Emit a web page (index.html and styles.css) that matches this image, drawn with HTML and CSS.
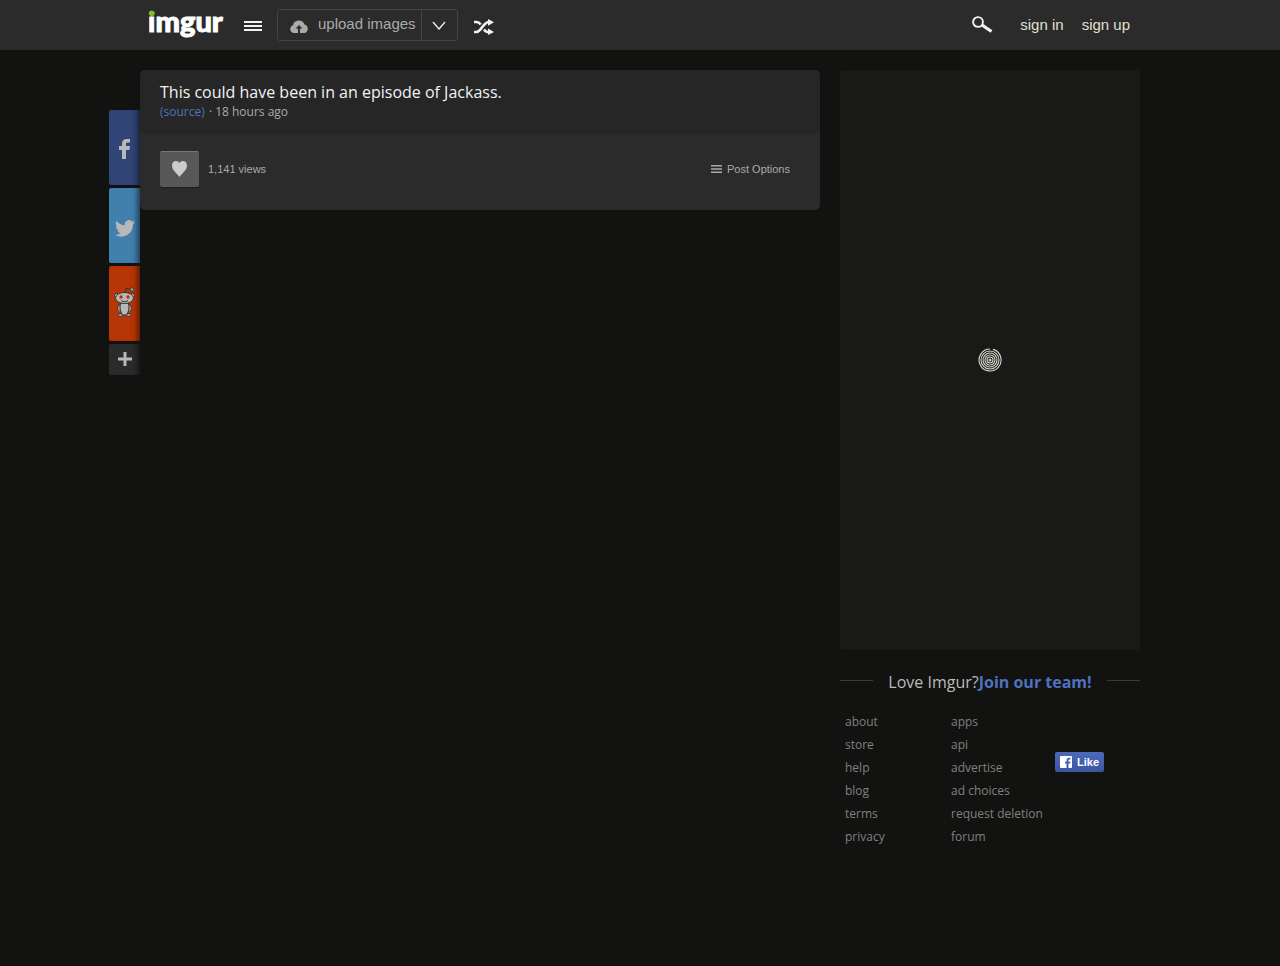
FILE: index.html
```html
<!DOCTYPE html>
<html lang="en">
<head>
    <meta charset="UTF-8">
    <meta name="viewport" content="width=device-width, initial-scale=1.0">
    <title>This could have been in an episode of Jackass. - Imgur</title>
    <link rel="stylesheet" href="styles.css">
</head>
<body>
    <header class="topbar">
        <div class="topbar-inner">
            <a href="#" class="logo"><span class="logo-i">i</span>mgur</a>
            <button type="button" class="icon-button menu" aria-label="Menu">
                <svg width="18" height="10" viewBox="0 0 18 10" fill="#f2f2f2"><path d="M0 0h18v2H0zM0 4h18v2H0zM0 8h18v2H0z"/></svg>
            </button>
            <div class="upload">
                <button type="button" class="upload-main">
                    <svg width="18" height="13" viewBox="0 0 18 13"><path d="M4 13A4 4 0 0 1 3 5.200 6 6 0 0 1 14.500 4.400a4.400 4.400 0 0 1-.5 8.600z" fill="#aaa"/><path d="M9 5l3.500 3.500H10V13H8V8.500H5.500z" fill="#2b2b2b"/></svg>
                    upload images
                </button>
                <button type="button" class="upload-more" aria-label="More upload options">
                    <svg width="14" height="9" viewBox="0 0 14 9" fill="none" stroke="#e6e6d8" stroke-width="1.500"><path d="M1 1l6 7 6-7"/></svg>
                </button>
            </div>
            <button type="button" class="icon-button random" aria-label="Random">
                <svg width="20" height="16" viewBox="0 0 20 16"><path d="M0 13h2.500C7.500 13 9 3 15 3M0 3h2.500c2 0 3.200 1.200 4.200 2.600M10 10.500c1.200 1.600 2.600 2.700 5 2.700" fill="none" stroke="#f2f2f2" stroke-width="2.600"/><path d="M14 0l6 3.200-6 3.500zM14 9.500l6 3.500-6 3z" fill="#f2f2f2"/></svg>
            </button>
            <nav class="account">
                <button type="button" class="icon-button" aria-label="Search">
                    <svg width="21" height="17" viewBox="0 0 21 17" fill="none" stroke="#f2f2f2"><circle cx="6" cy="6" r="4.900" stroke-width="1.900"/><path d="M10 9l9.500 6.500" stroke-width="3.200"/></svg>
                </button>
                <a href="#">sign in</a>
                <a href="#">sign up</a>
            </nav>
        </div>
    </header>

    <div class="page">
        <div class="share">
            <a href="#" class="share-item facebook" aria-label="Share on Facebook">
                <svg width="11" height="20" viewBox="0 0 11 20" fill="#b8b8b8"><path d="M3 20v-9H0V7h3V5c0-3.200 1.700-5 4.500-5H11v3.500H8.500C7.300 3.500 7 4 7 5v2h4l-.5 4H7v9z"/></svg>
            </a>
            <a href="#" class="share-item twitter" aria-label="Share on Twitter">
                <svg width="20" height="17" viewBox="0 0 24 20" fill="#b8b8b8"><path d="M24 2.400a10 10 0 0 1-2.800.8A5 5 0 0 0 23.300.5a10 10 0 0 1-3.100 1.200 4.900 4.900 0 0 0-8.400 4.500A14 14 0 0 1 1.700 1a4.900 4.900 0 0 0 1.500 6.600A4.900 4.900 0 0 1 1 7a5 5 0 0 0 3.900 4.900 5 5 0 0 1-2.200.1 4.900 4.900 0 0 0 4.600 3.400A9.900 9.900 0 0 1 0 17.500 14 14 0 0 0 21.500 5a10 10 0 0 0 2.500-2.600z"/></svg>
            </a>
            <a href="#" class="share-item reddit" aria-label="Share on Reddit">
                <svg width="21" height="30" viewBox="0 0 21 30" fill="#b8b8b8" stroke="#333" stroke-width="1"><path d="M11 6l1-4.500 4 .8" fill="none"/><circle cx="18" cy="2.500" r="1.700"/><circle cx="2.500" cy="8.500" r="2"/><circle cx="18.500" cy="8.500" r="2"/><ellipse cx="6.500" cy="28" rx="3" ry="1.300"/><ellipse cx="14.500" cy="28" rx="3" ry="1.300"/><path d="M6 17c-3 3-3 6-.5 8M15 17c3 3 3 6 .5 8"/><path d="M6.500 16h8c1 5 .5 8-2 12h-4c-2.500-4-3-7-2-12z"/><ellipse cx="10.500" cy="11" rx="9" ry="5.500"/><path d="M7 13.500c2 1.500 5 1.500 7 0" fill="none"/><g fill="#c22a05" stroke="none"><circle cx="7" cy="10" r="1.700"/><circle cx="14" cy="10" r="1.700"/></g></svg>
            </a>
            <button type="button" class="share-item more" aria-label="More sharing options">
                <svg width="14" height="14" viewBox="0 0 14 14" stroke="#b8b8b8" stroke-width="3"><path d="M7 0v14M0 7h14"/></svg>
            </button>
        </div>

        <main class="post">
            <div class="post-header">
                <h1>This could have been in an episode of Jackass.</h1>
                <p><a href="#">(source)</a> · 18 hours ago</p>
            </div>
            <div class="post-actions">
                <button type="button" class="favorite" aria-label="Favorite">
                    <svg width="15" height="16" viewBox="0 0 15 16" fill="#ccc"><path d="M7.500 16C5.500 12.500 0 9.500 0 4.500 0 1.800 1.700 0 4 0c1.600 0 2.900.8 3.500 2C8.100.8 9.400 0 11 0c2.300 0 4 1.800 4 4.500 0 5-5.500 8-7.500 11.500z"/></svg>
                </button>
                <span>1,141 views</span>
                <button type="button" class="options">
                    <svg width="11" height="8" viewBox="0 0 11 8" fill="#aaa"><path d="M0 0h11v1.500H0zM0 3.200h11v1.500H0zM0 6.400h11V8H0z"/></svg>
                    Post Options
                </button>
            </div>
        </main>

        <aside class="sidebar">
            <div class="loading">
                <svg width="24" height="24" viewBox="0 0 24 24" fill="none" stroke="#d8d8cc" stroke-width="1.100"><circle cx="12" cy="12" r="1"/><circle cx="12" cy="12" r="3"/><circle cx="12" cy="12" r="5"/><circle cx="12" cy="12" r="7"/><circle cx="12" cy="12" r="9"/><path d="M15 1.400a11 11 0 1 1-3-.4"/></svg>
            </div>
            <p class="team"><span>Love Imgur?<a href="#">Join our team!</a></span></p>
            <footer class="links">
                <ul>
                    <li><a href="#">about</a></li>
                    <li><a href="#">store</a></li>
                    <li><a href="#">help</a></li>
                    <li><a href="#">blog</a></li>
                    <li><a href="#">terms</a></li>
                    <li><a href="#">privacy</a></li>
                </ul>
                <ul>
                    <li><a href="#">apps</a></li>
                    <li><a href="#">api</a></li>
                    <li><a href="#">advertise</a></li>
                    <li><a href="#">ad choices</a></li>
                    <li><a href="#">request deletion</a></li>
                    <li><a href="#">forum</a></li>
                </ul>
                <button type="button" class="like">
                    <svg width="12" height="12" viewBox="0 0 12 12"><rect width="12" height="12" rx="1" fill="#fff"/><path d="M6.500 12V7.500H5V5.700h1.500V4.500c0-1.800 1-2.800 2.500-2.800h1.500v1.800H9.300c-.6 0-.8.3-.8.900v1.300h2l-.3 1.800H8.500V12z" fill="#4560ae"/></svg>
                    Like
                </button>
            </footer>
        </aside>
    </div>
</body>
</html>
```
FILE: styles.css
```css
* {
    box-sizing: border-box;
}

:root {
    --bar: #2b2b2b;
    --blue: #4e72bf;
    --grey: #aaa;
}

body {
    margin: 0;
    background-color: #121211;
    color: var(--grey);
    font-family: "Open Sans", sans-serif;
    font-size: 12px;
}

a {
    color: inherit;
    text-decoration: none;
}

button {
    padding: 0;
    border: 0;
    background: none;
    color: inherit;
    font-family: "Liberation Sans", Arial, sans-serif;
    cursor: pointer;
}

svg {
    display: block;
}

h1, p, ul {
    margin: 0;
    padding: 0;
}

/* top bar */
.topbar {
    background-color: var(--bar);
    font-family: "Liberation Sans", Arial, sans-serif;
    font-size: 15px;
}

.topbar-inner {
    display: flex;
    align-items: center;
    max-width: 1000px;
    height: 50px;
    margin: 0 auto;
    padding: 0 10px 0 8px;
}

.logo {
    width: 76px;
    height: 50px;
    line-height: 42px;
    color: #fff;
    font-family: Lato, sans-serif;
    font-size: 29px;
    font-weight: 900;
    -webkit-text-stroke: 1px #fff;
}

/* the dot of the i is green, the stem white */
.logo-i {
    background: linear-gradient(#85bf25 13px, #fff 13px);
    -webkit-background-clip: text;
    background-clip: text;
    color: transparent;
    -webkit-text-stroke-color: transparent;
}

.menu {
    margin: 2px 15px 0 20px;
}

.upload {
    display: flex;
    height: 32px;
    border: 1px solid #444;
    border-radius: 3px;
}

.upload-main {
    display: flex;
    align-items: center;
    gap: 10px;
    padding: 0 5px 4px 12px;
    color: var(--grey);
    font-size: 15px;
}

.upload-main svg {
    margin-top: 6px;
}

.upload-more {
    display: grid;
    place-items: center;
    width: 36px;
    border-left: 1px solid #444;
}

.random {
    margin: 4px 0 0 16px;
}

.account {
    display: flex;
    align-items: center;
    gap: 18px;
    margin-left: auto;
    padding-bottom: 2px;
    color: #e0e0d4;
}

.account .icon-button {
    margin-right: 9px;
}

/* page columns */
.page {
    display: grid;
    grid-template-columns: 31px minmax(0, 1fr) 300px;
    align-items: start;
    max-width: 1062px;
    margin: 0 auto;
    padding: 20px 31px 40px 0;
}

.share {
    display: grid;
    gap: 3px;
    padding-top: 40px;
}

.share-item {
    display: grid;
    place-items: center;
    height: 75px;
    border-radius: 2px 0 0 2px;
    box-shadow: inset -7px 0 6px -5px rgba(0, 0, 0, 0.6);
}

.facebook {
    padding-top: 2px;
    background-color: #304575;
}

.twitter {
    padding-top: 5px;
    background-color: #417fad;
}

.reddit {
    padding-bottom: 4px;
    background-color: #b83505;
}

.more {
    height: 31px;
    padding-bottom: 2px;
    background-color: var(--bar);
}

.post {
    margin-right: 20px;
    background-color: var(--bar);
    border-radius: 5px;
}

.post-header {
    height: 62px;
    padding: 10px 20px;
    background-color: #262626;
    border-radius: 5px 5px 0 0;
    box-shadow: 0 1px 2px rgba(0, 0, 0, 0.2);
}

.post-header h1 {
    color: #f2f2f2;
    font-size: 16px;
    font-weight: 400;
    line-height: 24px;
}

.post-header p {
    line-height: 16px;
}

.post-header a {
    margin-right: 1px;
    color: var(--blue);
}

.post-actions {
    display: flex;
    align-items: center;
    padding: 19px 30px 23px 20px;
    font-family: "Liberation Sans", Arial, sans-serif;
    font-size: 11px;
}

.favorite {
    display: grid;
    place-items: center;
    width: 39px;
    height: 36px;
    margin-right: 9px;
    padding-bottom: 2px;
    border-top: 1px solid #777;
    border-radius: 2px;
    background-color: #585858;
    box-shadow: 0 1px 1px rgba(0, 0, 0, 0.3);
}

.options {
    display: flex;
    align-items: center;
    gap: 5px;
    margin-left: auto;
    font-size: 11px;
}

/* sidebar */
.loading {
    display: grid;
    place-items: center;
    height: 580px;
    border-radius: 4px;
    background-color: #191918;
}

.team {
    display: flex;
    align-items: center;
    gap: 15px;
    margin-top: 20px;
    font-size: 16px;
    line-height: 24px;
    color: #bbb;
}

.team::before,
.team::after {
    content: "";
    flex: 1;
    height: 1px;
    margin-bottom: 3px;
    background-color: #3a3a3a;
}

.team a {
    color: var(--blue);
    font-weight: 700;
}

.links {
    display: grid;
    grid-template-columns: 106px 104px auto;
    justify-content: start;
    align-items: start;
    margin-top: 16px;
    padding-left: 5px;
    color: #808080;
}

.links ul {
    list-style: none;
    line-height: 23px;
    white-space: nowrap;
}

.like {
    display: flex;
    align-items: center;
    gap: 5px;
    height: 20px;
    margin-top: 42px;
    padding: 0 5px;
    border-radius: 2px;
    background: linear-gradient(#4c69ba, #3b55a0);
    color: #fff;
    font-size: 11px;
    font-weight: 700;
}
```
